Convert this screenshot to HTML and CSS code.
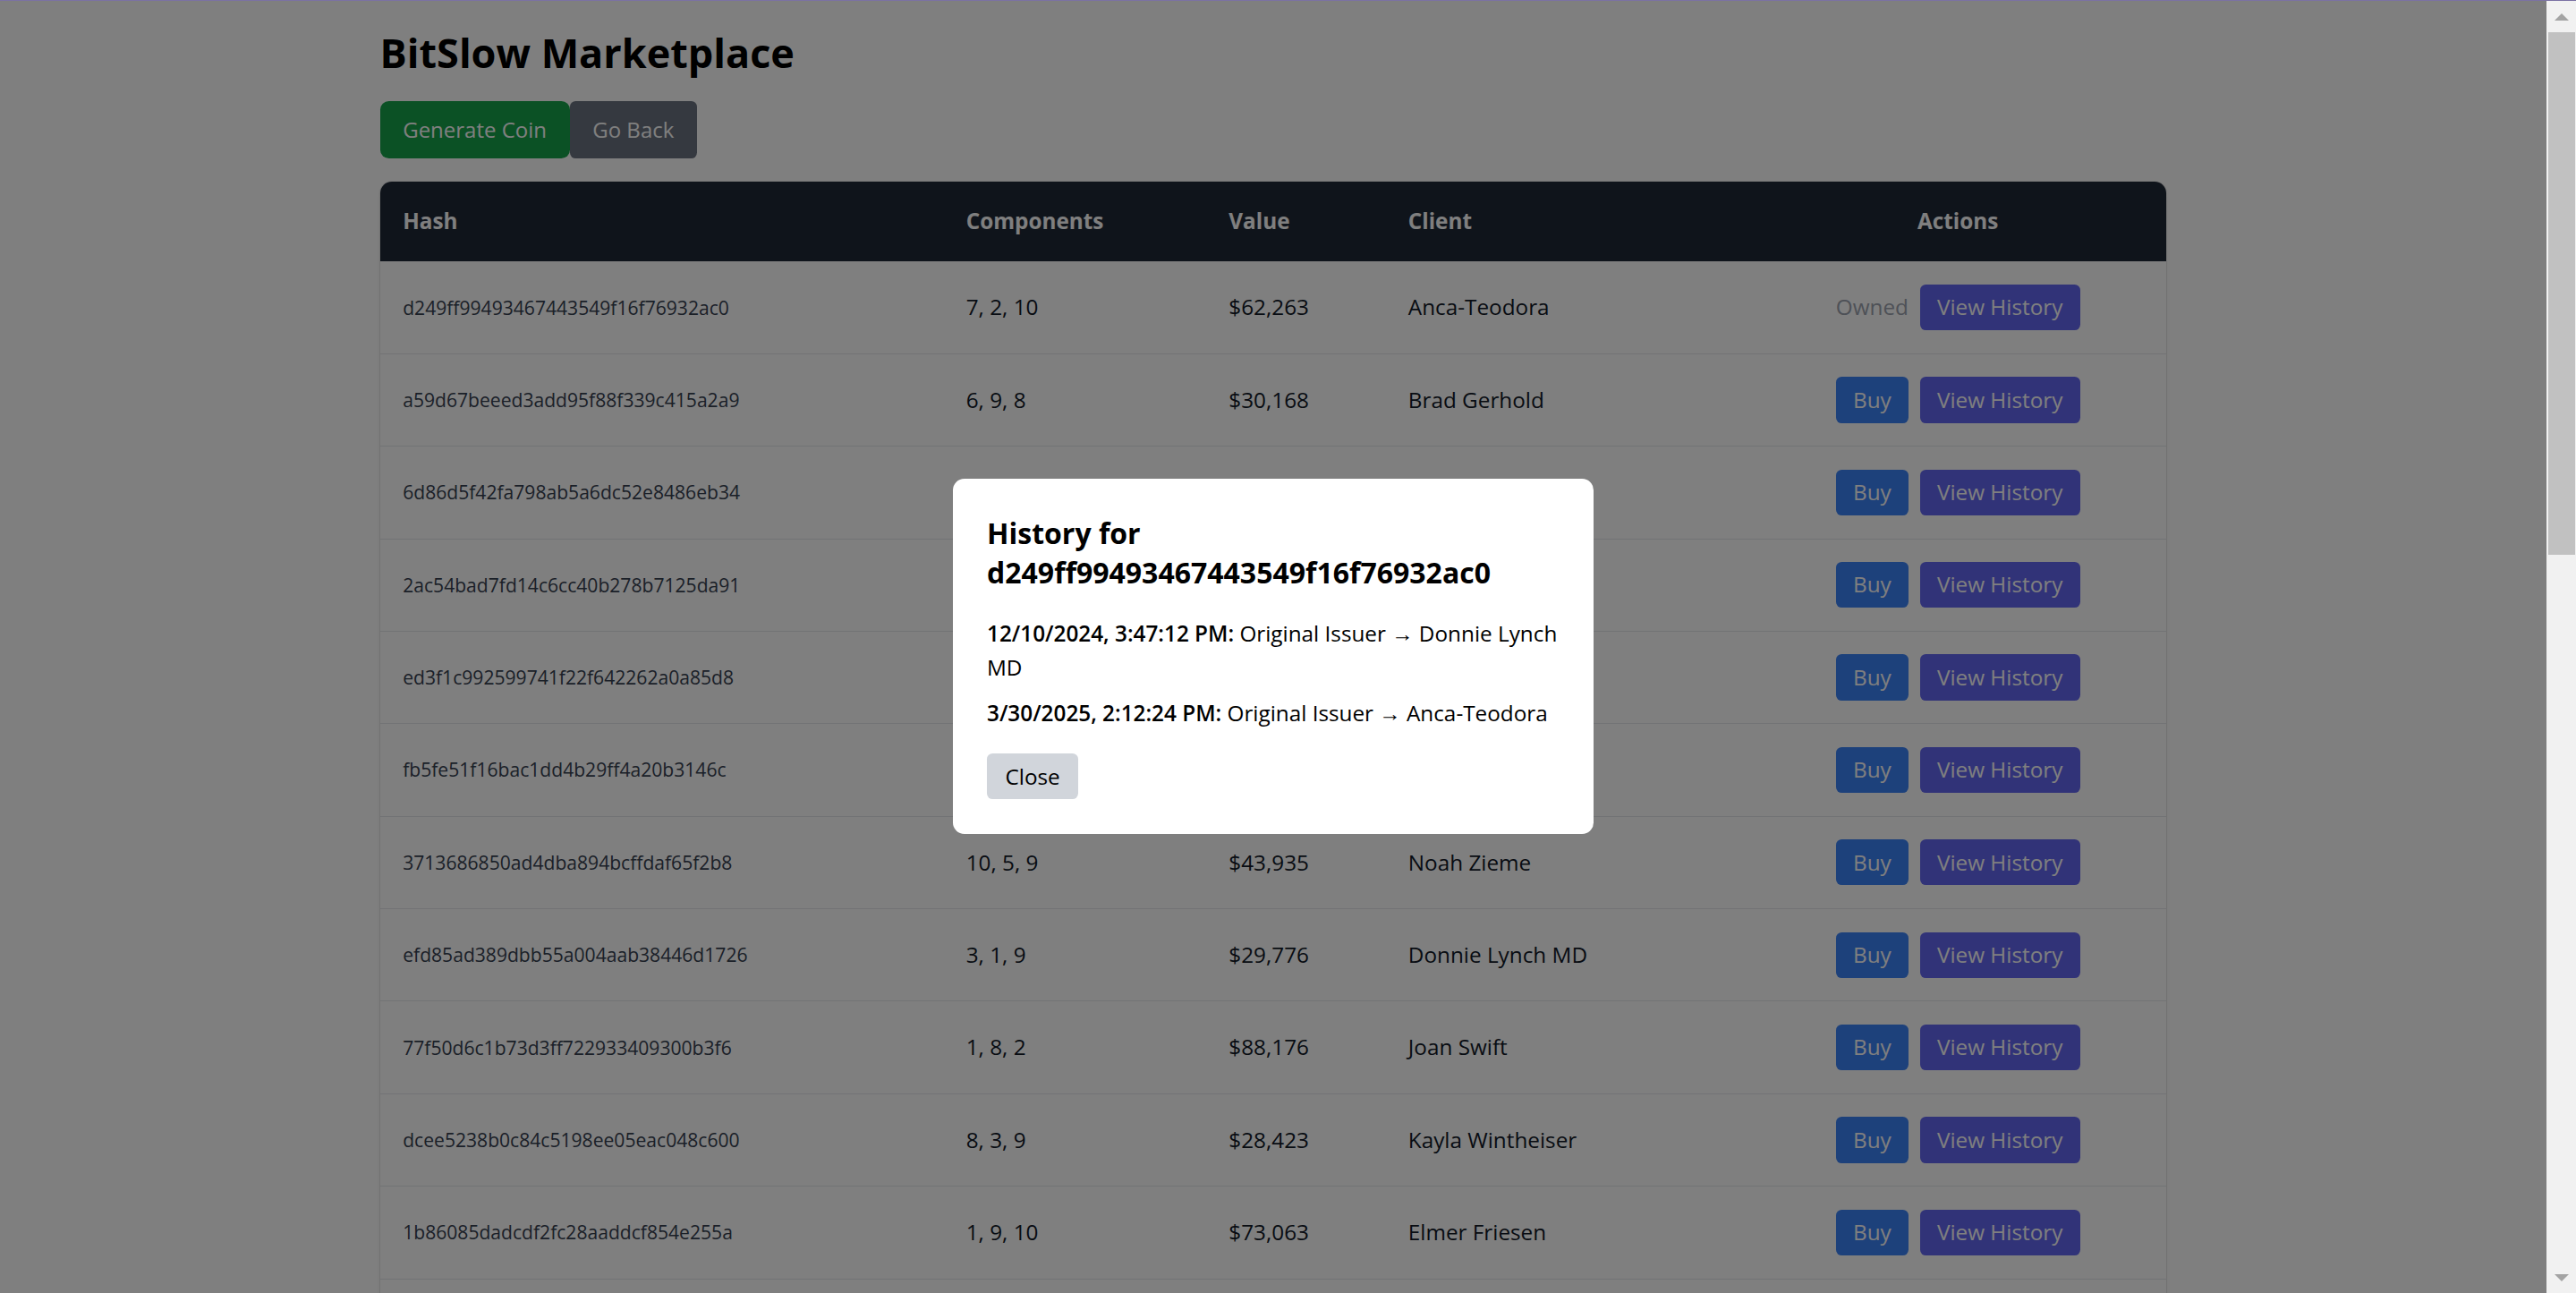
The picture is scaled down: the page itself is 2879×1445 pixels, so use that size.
FILE: index.html
```html
<!DOCTYPE html>
<html lang="en">
<head>
<meta charset="utf-8">
<title>BitSlow Marketplace</title>
<link rel="stylesheet" href="styles.css">
</head>
<body>
<div class="topline"></div>
<div class="frame">
  <main class="viewport">
    <div class="page">
      <h1 class="title">BitSlow Marketplace</h1>
      <div class="btn-row">
        <button class="btn btn-green">Generate Coin</button>
        <button class="btn btn-gray">Go Back</button>
      </div>
      <div class="table-wrap">
        <table class="coins">
          <colgroup>
            <col class="c-hash"><col class="c-comp"><col class="c-val"><col class="c-client"><col class="c-act">
          </colgroup>
          <thead>
            <tr><th>Hash</th><th>Components</th><th>Value</th><th>Client</th><th class="center">Actions</th></tr>
          </thead>
          <tbody>
            <tr><td class="hash">d249ff99493467443549f16f76932ac0</td><td>7, 2, 10</td><td>$62,263</td><td>Anca-Teodora</td><td><div class="actions"><span class="owned">Owned</span><button class="sbtn sbtn-indigo">View History</button></div></td></tr>
            <tr><td class="hash">a59d67beeed3add95f88f339c415a2a9</td><td>6, 9, 8</td><td>$30,168</td><td>Brad Gerhold</td><td><div class="actions"><button class="sbtn sbtn-blue">Buy</button><button class="sbtn sbtn-indigo">View History</button></div></td></tr>
            <tr><td class="hash">6d86d5f42fa798ab5a6dc52e8486eb34</td><td>4, 6, 1</td><td>$51,402</td><td>Mae Kuhn</td><td><div class="actions"><button class="sbtn sbtn-blue">Buy</button><button class="sbtn sbtn-indigo">View History</button></div></td></tr>
            <tr><td class="hash">2ac54bad7fd14c6cc40b278b7125da91</td><td>2, 5, 7</td><td>$36,910</td><td>Ivan Hahn</td><td><div class="actions"><button class="sbtn sbtn-blue">Buy</button><button class="sbtn sbtn-indigo">View History</button></div></td></tr>
            <tr><td class="hash">ed3f1c992599741f22f642262a0a85d8</td><td>9, 1, 4</td><td>$67,045</td><td>Lula Bins</td><td><div class="actions"><button class="sbtn sbtn-blue">Buy</button><button class="sbtn sbtn-indigo">View History</button></div></td></tr>
            <tr><td class="hash">fb5fe51f16bac1dd4b29ff4a20b3146c</td><td>3, 8, 6</td><td>$19,588</td><td>Ray Stokes</td><td><div class="actions"><button class="sbtn sbtn-blue">Buy</button><button class="sbtn sbtn-indigo">View History</button></div></td></tr>
            <tr><td class="hash">3713686850ad4dba894bcffdaf65f2b8</td><td>10, 5, 9</td><td>$43,935</td><td>Noah Zieme</td><td><div class="actions"><button class="sbtn sbtn-blue">Buy</button><button class="sbtn sbtn-indigo">View History</button></div></td></tr>
            <tr><td class="hash">efd85ad389dbb55a004aab38446d1726</td><td>3, 1, 9</td><td>$29,776</td><td>Donnie Lynch MD</td><td><div class="actions"><button class="sbtn sbtn-blue">Buy</button><button class="sbtn sbtn-indigo">View History</button></div></td></tr>
            <tr><td class="hash">77f50d6c1b73d3ff722933409300b3f6</td><td>1, 8, 2</td><td>$88,176</td><td>Joan Swift</td><td><div class="actions"><button class="sbtn sbtn-blue">Buy</button><button class="sbtn sbtn-indigo">View History</button></div></td></tr>
            <tr><td class="hash">dcee5238b0c84c5198ee05eac048c600</td><td>8, 3, 9</td><td>$28,423</td><td>Kayla Wintheiser</td><td><div class="actions"><button class="sbtn sbtn-blue">Buy</button><button class="sbtn sbtn-indigo">View History</button></div></td></tr>
            <tr><td class="hash">1b86085dadcdf2fc28aaddcf854e255a</td><td>1, 9, 10</td><td>$73,063</td><td>Elmer Friesen</td><td><div class="actions"><button class="sbtn sbtn-blue">Buy</button><button class="sbtn sbtn-indigo">View History</button></div></td></tr>
            <tr><td class="hash">4e1c9a8f0b7d23e6a5c18f9d0b2e7a34</td><td>5, 2, 6</td><td>$41,287</td><td>Ora Lang</td><td><div class="actions"><button class="sbtn sbtn-blue">Buy</button><button class="sbtn sbtn-indigo">View History</button></div></td></tr>
          </tbody>
        </table>
      </div>
    </div>
    <div class="overlay">
      <div class="modal">
        <h2 class="modal-title">History for d249ff99493467443549f16f76932ac0</h2>
        <div class="entries">
          <p class="entry"><strong>12/10/2024, 3:47:12 PM:</strong> Original Issuer → Donnie Lynch MD</p>
          <p class="entry"><strong>3/30/2025, 2:12:24 PM:</strong> Original Issuer → Anca-Teodora</p>
        </div>
        <button class="close-btn">Close</button>
      </div>
    </div>
  </main>
  <div class="scrollbar">
    <div class="sb-btn"><span class="arrow-up"></span></div>
    <div class="sb-thumb"></div>
    <div class="sb-track"></div>
    <div class="sb-btn"><span class="arrow-down"></span></div>
  </div>
</div>
</body>
</html>
```

FILE: styles.css
```css
* { box-sizing: border-box; }

html, body {
  margin: 0;
  padding: 0;
  height: 100%;
  overflow: hidden;
  background: #ffffff;
  font-family: "Open Sans", "Noto Sans", sans-serif;
  color: #111827;
}

.topline {
  height: 1px;
  background: #7b71a3;
}

.frame {
  display: flex;
  height: calc(100vh - 1px);
}

.viewport {
  flex: 1;
  position: relative;
  overflow: hidden;
}

.page {
  max-width: 2048px;
  margin: 0 auto;
  padding: 29px 25.6px 25.6px;
}

.title {
  margin: 0 0 25.6px;
  font-size: 45px;
  line-height: 57.6px;
  font-weight: 700;
  color: #000;
}

.btn-row {
  display: flex;
  margin-bottom: 25.6px;
}

.btn {
  font-family: inherit;
  font-size: 24px;
  line-height: 38.4px;
  padding: 12.8px 25.6px;
  border: none;
  color: #ffffff;
  cursor: pointer;
}

.btn-green {
  background: #16a34a;
  border-radius: 9.6px;
}

.btn-gray {
  background: #6b7280;
  border-radius: 6.4px;
}

.table-wrap {
  border-radius: 12.8px;
  overflow: hidden;
  background: #ffffff;
  box-shadow: 0 0 0 1px rgba(0, 0, 0, 0.07), 0 4px 6px -1px rgba(0, 0, 0, 0.1);
}

.coins {
  width: 100%;
  border-collapse: collapse;
  table-layout: fixed;
}

.c-hash { width: 629.5px; }
.c-comp { width: 293.6px; }
.c-val { width: 200.5px; }
.c-client { width: 406.6px; }
.c-act { width: 466.8px; }

.coins th {
  background: #1f2937;
  color: #ffffff;
  text-align: left;
  font-weight: 700;
  font-size: 24.3px;
  line-height: 38.4px;
  padding: 25.6px;
}

.coins th.center { text-align: center; }

.coins td {
  padding: 25.6px;
  font-size: 24.3px;
  line-height: 38.4px;
  color: #111827;
  border-bottom: 1px solid #e5e7eb;
  vertical-align: middle;
  white-space: nowrap;
}

.coins td.hash {
  font-size: 21.1px;
  line-height: 32px;
  color: #374151;
}

.actions {
  display: flex;
  justify-content: center;
  align-items: center;
  gap: 12.8px;
}

.owned {
  color: #9ca3af;
  font-size: 24.3px;
  line-height: 38.4px;
}

.sbtn {
  font-family: inherit;
  font-size: 24.3px;
  line-height: 38.4px;
  padding: 6.4px 19.2px;
  border: none;
  border-radius: 6.4px;
  color: #ffffff;
}

.sbtn-blue { background: #3b82f6; }
.sbtn-indigo { background: #6366f1; }

.overlay {
  position: absolute;
  inset: 0;
  background: rgba(0, 0, 0, 0.5);
  display: flex;
  align-items: center;
  justify-content: center;
  padding-top: 21px;
}

.modal {
  width: 716.8px;
  background: #ffffff;
  border-radius: 12.8px;
  padding: 38.4px;
}

.modal-title {
  margin: 0 0 25.6px;
  font-size: 32px;
  line-height: 44.8px;
  font-weight: 700;
  color: #000;
}

.entry {
  margin: 0 0 12.8px;
  font-size: 24.3px;
  line-height: 38.4px;
  color: #000;
}

.entry:last-child { margin-bottom: 0; }

.entry strong { font-weight: 600; }

.close-btn {
  margin-top: 25.6px;
  font-family: inherit;
  font-size: 24.3px;
  line-height: 38.4px;
  padding: 6.4px 20.5px;
  border: none;
  border-radius: 6.4px;
  background: #d1d5db;
  color: #000;
}

.scrollbar {
  width: 33px;
  background: #f1f1f1;
  display: flex;
  flex-direction: column;
}

.sb-btn {
  height: 35px;
  display: flex;
  align-items: center;
  justify-content: center;
}

.arrow-up {
  width: 0;
  height: 0;
  border-left: 8px solid transparent;
  border-right: 8px solid transparent;
  border-bottom: 8px solid #a3a3a3;
}

.arrow-down {
  width: 0;
  height: 0;
  border-left: 8px solid transparent;
  border-right: 8px solid transparent;
  border-top: 8px solid #a3a3a3;
}

.sb-thumb {
  height: 584px;
  margin: 0 1px 0 2px;
  background: #c1c1c1;
}

.sb-track { flex: 1; }
```
